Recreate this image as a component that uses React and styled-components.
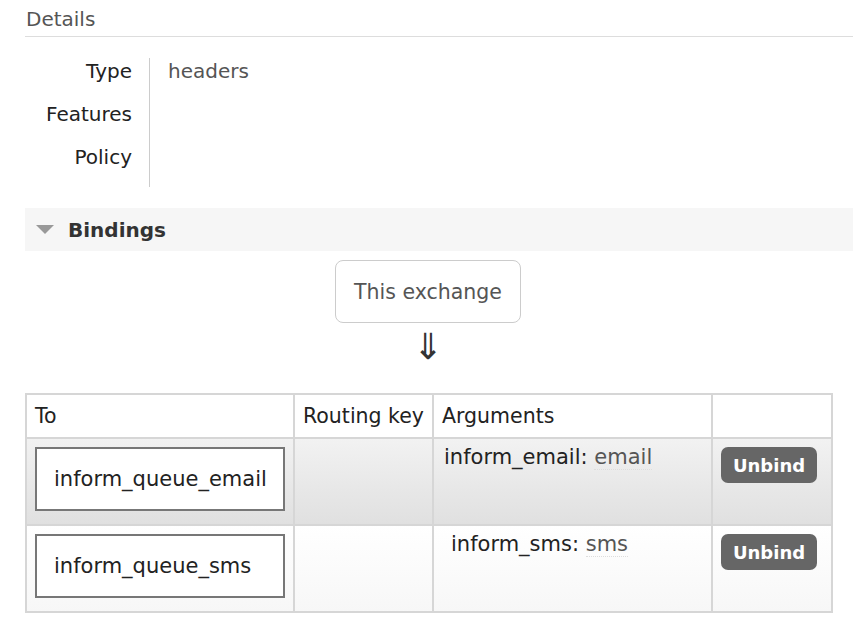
import styled, { createGlobalStyle } from "styled-components";

const GlobalStyle = createGlobalStyle`
  * {
    box-sizing: border-box;
  }

  body {
    margin: 0;
    background: #fff;
    font-family: "DejaVu Sans", Verdana, sans-serif;
    color: #222;
  }
`;

const Page = styled.div`
  padding: 7px 0 0 25px;
  width: 853px;
`;

const SectionTitle = styled.h2`
  margin: 0;
  font-size: 20px;
  font-weight: 400;
  color: #555;
  line-height: 24px;
  padding: 0 0 5px 1px;
  border-bottom: 1px solid #ddd;
`;

const Details = styled.div`
  display: grid;
  grid-template-columns: 107px 18px auto;
  margin-top: 21px;
`;

const Labels = styled.div`
  display: flex;
  flex-direction: column;
  align-items: flex-end;
`;

const Label = styled.div`
  height: 43px;
  line-height: 26px;
  font-size: 20px;
  color: #222;
`;

const Divider = styled.div`
  border-right: 1px solid #ccc;
  width: 18px;
`;

const Value = styled.div`
  padding-left: 18px;
  line-height: 26px;
  font-size: 20px;
  color: #555;
`;

const BindingsBar = styled.div`
  display: flex;
  align-items: center;
  gap: 14px;
  height: 43px;
  margin-top: 21px;
  padding-left: 11px;
  background: #f6f6f6;
  font-size: 20px;
  font-weight: 700;
  color: #333;
`;

const Triangle = styled.span`
  width: 0;
  height: 0;
  border-left: 9px solid transparent;
  border-right: 9px solid transparent;
  border-top: 9px solid #999;
`;

const Flow = styled.div`
  width: 806px;
  display: flex;
  flex-direction: column;
  align-items: center;
  padding-top: 9px;
`;

const ExchangeBox = styled.div`
  width: 186px;
  height: 63px;
  border: 1px solid #ccc;
  border-radius: 8px;
  display: flex;
  align-items: center;
  justify-content: center;
  font-size: 20.5px;
  color: #555;
`;

const Arrow = styled.div`
  font-size: 36px;
  line-height: 44px;
  height: 44px;
  margin-top: 2px;
  color: #333;
`;

const Table = styled.table`
  margin-top: 24px;
  border-collapse: collapse;
  width: 806px;
  font-size: 21px;
  table-layout: fixed;

  th,
  td {
    border: 2px solid #d6d6d6;
    vertical-align: top;
  }

  th {
    height: 44px;
    vertical-align: middle;
    text-align: left;
    font-size: 20.5px;
    font-weight: 400;
    padding: 0 8px;
    color: #222;
  }
`;

const Row = styled.tr`
  height: 87px;
  background: ${(p) =>
    p.$shade
      ? "linear-gradient(#f2f2f2, #e0e0e0)"
      : "linear-gradient(#ffffff, #f7f7f7)"};

  td {
    padding: 8px;
  }
`;

const QueueBox = styled.div`
  height: 64px;
  border: 2px solid #777;
  background: #fff;
  display: flex;
  align-items: center;
  padding-left: 17px;
  color: #222;
`;

const ArgCell = styled.td`
  && {
    padding: 6px 8px 0 ${(p) => p.$indent}px;
  }
`;

const ArgKey = styled.span`
  color: #222;
`;

const ArgValue = styled.span`
  color: #555;
  border-bottom: 1px dotted #ddd;
`;

const UnbindButton = styled.button`
  width: 96px;
  height: 36px;
  border: 0;
  border-radius: 7px;
  background: #666;
  color: #fff;
  font-family: inherit;
  font-size: 18px;
  font-weight: 700;
  padding: 0;
`;

const bindings = [
  { queue: "inform_queue_email", key: "inform_email", value: "email", indent: 10 },
  { queue: "inform_queue_sms", key: "inform_sms", value: "sms", indent: 17 },
];

const App = () => {
  return (
    <Page>
      <GlobalStyle />
      <SectionTitle>Details</SectionTitle>
      <Details>
        <Labels>
          <Label>Type</Label>
          <Label>Features</Label>
          <Label>Policy</Label>
        </Labels>
        <Divider />
        <Value>headers</Value>
      </Details>

      <BindingsBar>
        <Triangle />
        Bindings
      </BindingsBar>

      <Flow>
        <ExchangeBox>This exchange</ExchangeBox>
        <Arrow>⇓</Arrow>
      </Flow>

      <Table>
        <colgroup>
          <col style={{ width: 268 }} />
          <col style={{ width: 139 }} />
          <col style={{ width: 279 }} />
          <col style={{ width: 120 }} />
        </colgroup>
        <thead>
          <tr>
            <th>To</th>
            <th>Routing key</th>
            <th>Arguments</th>
            <th></th>
          </tr>
        </thead>
        <tbody>
          {bindings.map((b, i) => (
            <Row key={b.queue} $shade={i === 0}>
              <td>
                <QueueBox>{b.queue}</QueueBox>
              </td>
              <td></td>
              <ArgCell $indent={b.indent}>
                <ArgKey>{b.key}: </ArgKey>
                <ArgValue>{b.value}</ArgValue>
              </ArgCell>
              <td>
                <UnbindButton>Unbind</UnbindButton>
              </td>
            </Row>
          ))}
        </tbody>
      </Table>
    </Page>
  );
};

export default App;
